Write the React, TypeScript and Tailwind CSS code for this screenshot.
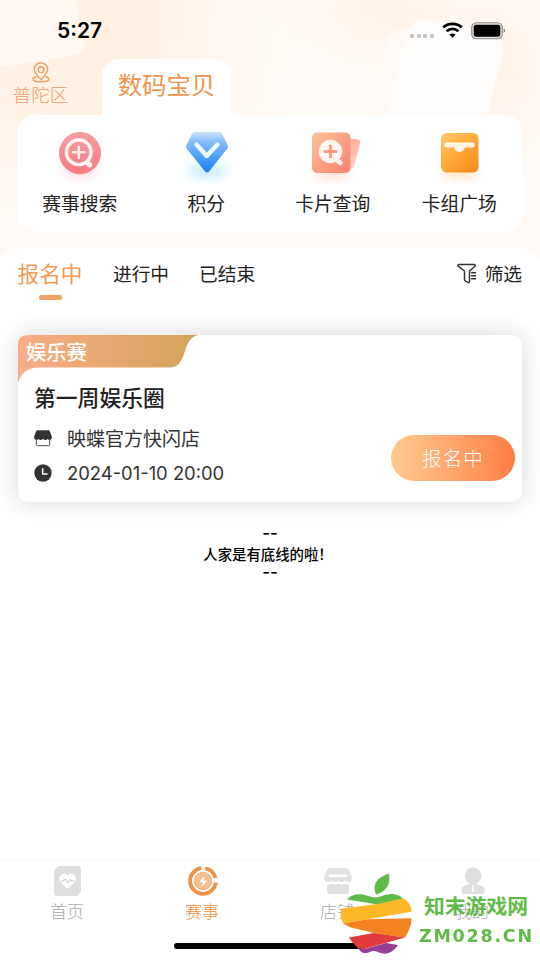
import type { ReactNode } from "react";

function SignalDots() {
  return (
    <div className="mt-[12px] flex gap-[2.7px]">
      {[0, 1, 2, 3].map((i) => (
        <span key={i} className="h-1 w-1 rounded-[1.5px] bg-[#c4c2c0]" />
      ))}
    </div>
  );
}

function WifiIcon() {
  return (
    <svg width="21" height="16" viewBox="0 0 21 16" fill="none" stroke="#000" strokeWidth="2.8">
      <path d="M1.2 5.4C6.3.8 14.7.8 19.8 5.4" />
      <path d="M4.6 9.2c3.4-3 8.4-3 11.8 0" />
      <path d="M10.5 15.7 7.4 12.6c1.8-1.5 4.4-1.5 6.2 0z" fill="#000" stroke="none" />
    </svg>
  );
}

function BatteryIcon() {
  return (
    <svg width="35" height="18" viewBox="0 0 35 18">
      <rect x=".7" y=".7" width="30.6" height="16" rx="4.8" fill="#e3e0dd" stroke="#8e8c8a" strokeWidth="1.1" />
      <rect x="2.7" y="2.7" width="26.6" height="12" rx="2.5" fill="#000" />
      <path d="M32.7 6.3c1.8.8 1.8 4 0 4.8z" fill="#777" />
    </svg>
  );
}

function PinIcon() {
  return (
    <svg width="18" height="21" viewBox="0 0 18 21" fill="none" stroke="#eda05c" strokeWidth="1.4">
      <path d="M9 17.6C6.4 15 2.3 11.3 2.3 7.6a6.7 6.7 0 0 1 13.4 0c0 3.7-4.1 7.4-6.7 10z" />
      <circle cx="9" cy="7.7" r="2.9" />
      <path d="M4.4 14.8c-2.1.5-3.4 1.2-3.4 2.1 0 1.6 3.6 2.8 8 2.8s8-1.2 8-2.8c0-.9-1.3-1.6-3.4-2.1" />
    </svg>
  );
}

function SearchBadge() {
  return (
    <svg width="60" height="60" viewBox="0 0 60 60">
      <defs>
        <linearGradient id="pink" x1="0" y1="0" x2="0" y2="1">
          <stop stopColor="#f2a0a1" />
          <stop offset="1" stopColor="#fa7a82" />
        </linearGradient>
        <filter id="soft" x="-50%" y="-50%" width="200%" height="200%">
          <feGaussianBlur stdDeviation="4" />
        </filter>
      </defs>
      <ellipse cx="30" cy="44" rx="17" ry="9" fill="#fdbcc0" opacity=".5" filter="url(#soft)" />
      <circle cx="30" cy="28" r="21" fill="url(#pink)" />
      <circle cx="28.8" cy="27.3" r="12.3" fill="none" stroke="#fff5f3" strokeWidth="3.4" />
      <path d="m37.5 37.5 2 2.2" stroke="#fff0ef" strokeWidth="5.4" strokeLinecap="round" />
      <path d="M28.8 21.7v11.4M23 27.3h11.5" stroke="#ffeceb" strokeWidth="2.5" strokeLinecap="round" />
    </svg>
  );
}

function PointsBadge() {
  return (
    <svg width="60" height="60" viewBox="0 0 60 60">
      <defs>
        <linearGradient id="blue" x1="0" y1="0" x2="0" y2="1">
          <stop stopColor="#c9e4ff" />
          <stop offset=".25" stopColor="#82bcfb" />
          <stop offset="1" stopColor="#1681f5" />
        </linearGradient>
      </defs>
      <ellipse cx="30" cy="46" rx="20" ry="9" fill="#b5e8ff" opacity=".6" filter="url(#soft)" />
      <path
        d="M18 7h24q2 0 3 1.700l5.600 11.200q1.100 2-.4 3.800L32 46.500q-2 2-4 0L9.800 23.700q-1.500-1.800-.4-3.800L15 8.700Q16 7 18 7z"
        fill="url(#blue)"
      />
      <path d="M19.500 19.500 29.700 31 40.500 19.500" fill="none" stroke="#edfaff" strokeWidth="4.4" strokeLinecap="round" strokeLinejoin="round" />
    </svg>
  );
}

function CardSearchBadge() {
  return (
    <svg width="60" height="60" viewBox="0 0 60 60">
      <defs>
        <linearGradient id="coral" x1="0" y1="0" x2="1" y2="1">
          <stop stopColor="#fec299" />
          <stop offset="1" stopColor="#f9806f" />
        </linearGradient>
        <linearGradient id="coralBack" x1="0" y1="0" x2="0" y2="1">
          <stop stopColor="#ffad98" />
          <stop offset="1" stopColor="#ffd5c8" />
        </linearGradient>
      </defs>
      <ellipse cx="29" cy="48" rx="18" ry="6" fill="#ffcdb2" opacity=".6" filter="url(#soft)" />
      <path d="m40 13 14.300 1.600q3.700.6 2.800 3.900l-6 23q-.8 3-4 3H38z" fill="url(#coralBack)" />
      <rect x="9" y="7.500" width="38.500" height="40.500" rx="5" fill="url(#coral)" />
      <circle cx="27.500" cy="26.500" r="11.700" fill="#fff8f2" />
      <path d="m33.500 34.500 3.700 3.500" stroke="#fff2ee" strokeWidth="4.800" strokeLinecap="round" />
      <path d="M27.500 21v11M22 26.500h11" stroke="#fb9b80" strokeWidth="3.200" strokeLinecap="round" />
    </svg>
  );
}

function DeckBadge() {
  return (
    <svg width="60" height="60" viewBox="0 0 60 60">
      <defs>
        <linearGradient id="amber" x1="0" y1="0" x2=".8" y2="1">
          <stop stopColor="#fec96e" />
          <stop offset=".5" stopColor="#feac38" />
          <stop offset="1" stopColor="#f88b23" />
        </linearGradient>
      </defs>
      <ellipse cx="30" cy="48" rx="18" ry="6" fill="#ffd69f" opacity=".6" filter="url(#soft)" />
      <rect x="11" y="8" width="37.500" height="39.500" rx="5.500" fill="url(#amber)" />
      <path d="M16.500 17.500h26a2.400 2.400 0 0 1 0 4.900h-7.700c-1.300 6-9.300 6-10.600 0h-7.700a2.400 2.400 0 0 1 0-4.900z" fill="#fff6e6" />
    </svg>
  );
}

function FilterIcon() {
  return (
    <svg width="20" height="21" viewBox="0 0 20 21" fill="none" stroke="#333" strokeWidth="1.500" strokeLinecap="round" strokeLinejoin="round">
      <path d="M2 1.600h15.200c1 0 1.400 1 .8 1.700L12.500 8v10.500q-.2 1.500-1.700.9l-2.300-1.200q-1-.5-1-1.600V8L1.300 3.300C.5 2.600 1 1.600 2 1.600z" />
      <path d="M14.500 9.700h4M14.500 12.700h4M14.500 15.700h4" />
    </svg>
  );
}

function ShopIcon() {
  return (
    <svg width="18" height="17" viewBox="0 0 18 17">
      <path d="M3.700.2h10.600q1.100 0 1.600 1l1.700 4.600c.6 2-0 4-1.600 4-1.200 0-1.900-.3-2.300-.9-1 1.300-3.300 1.300-4.700.1-1.400 1.200-3.700 1.200-4.700-.1C3.900 9.500 3.200 9.800 2 9.800.4 9.800-.2 7.800.4 5.800L2.100 1.200Q2.600.2 3.700.2z" fill="#333" />
      <path d="M2.300 9v5.500q0 1.200 1.200 1.200h11q1.200 0 1.200-1.200V9" fill="none" stroke="#444" strokeWidth="1" />
    </svg>
  );
}

function ClockIcon() {
  return (
    <svg width="18" height="18" viewBox="0 0 18 18">
      <circle cx="9" cy="9" r="8.700" fill="#333" />
      <path d="M8.700 4.300v5.600h4.800" fill="none" stroke="#fff" strokeWidth="1.500" />
    </svg>
  );
}

function HomeTabIcon() {
  return (
    <svg width="30" height="32" viewBox="0 0 30 32">
      <path d="M7 1h18q3 0 3 3v22.500L24 31H4q-3 0-3-3V7q0-2 1.300-3.200L4 2.300Q5.300 1 7 1z" fill="#dedede" />
      <path d="M14.500 24 7.800 17.500c-5-5.200 2.200-12 6.700-7 4.500-5 11.700 1.800 6.700 7z" fill="#fff" />
      <path d="M7.500 16h3l2-2 2.300 3.500 2.300-3 1.600 1.500h3" fill="none" stroke="#ccc" strokeWidth="1.100" />
    </svg>
  );
}

function MatchTabIcon() {
  return (
    <svg width="32" height="32" viewBox="0 0 32 32">
      <path d="M14.300 3.200A12.900 12.900 0 1 0 28.800 17.500" fill="none" stroke="#ed9347" strokeWidth="3.800" />
      <path d="M18.200 3.300A12.900 12.900 0 0 1 28.500 13" fill="none" stroke="#ed9347" strokeWidth="3.800" />
      <circle cx="16" cy="16" r="8.800" fill="#f5bf91" stroke="#f0a869" strokeWidth=".8" />
      <path d="m17.500 11-5 6h3.500l-.8 4.500 5-6h-3.500z" fill="#fff" />
    </svg>
  );
}

function StoreTabIcon() {
  return (
    <svg width="30" height="28" viewBox="0 0 30 28">
      <path d="M7 1h16q2 0 3 2l2.700 6.500c.7 3.500-1 5.500-3.700 5.500-2 0-3-1-3.500-1.500-1.500 2-4.500 2-6.500 0-2 2-5 2-6.500 0C8 14 7 15 5 15c-2.700 0-4.400-2-3.700-5.500L4 3Q5 1 7 1z" fill="#e1e1e1" />
      <path d="M7 8.800h16" stroke="#fff" strokeWidth="2.500" strokeLinecap="round" />
      <path d="M4 17.500c2.500.4 3.800-.2 4.700-1 2 1.500 4.500 1.500 6.300 0 1.800 1.500 4.300 1.500 6.300 0 1 .8 2.200 1.400 4.700 1v7q0 2.500-2.500 2.500h-17Q4 27 4 24.500z" fill="#e1e1e1" />
    </svg>
  );
}

function MeTabIcon() {
  return (
    <svg width="26" height="28" viewBox="0 0 26 28">
      <circle cx="13" cy="8.800" r="8.300" fill="#dfdfdf" />
      <path d="M9.500 14.500h7v2.800l6 1.900q2 .8 2 3V25q0 2-2 2h-19q-2 0-2-2v-2.800q0-2.200 2-3l6-1.900z" fill="#dfdfdf" />
      <path d="m13 18 1.400 1.700-.9 1.100.8 3.500-1.300 1.200-1.300-1.200.8-3.500-.9-1.100z" fill="#fff" />
    </svg>
  );
}

function AppleLogo() {
  return (
    <svg width="74" height="82" viewBox="0 0 74 82">
      <path d="M36 21.500C31.500 11 38 3.500 49 .8c1.500 9-1 17.500-13 20.700z" fill="#5dbb46" />
      <path d="M7 26.500c7-7.500 17-5.500 23-3 3.500 1.500 7 1.300 10.500 0 8-3 15.500-4 22.500 2L38 31.500z" fill="#5dbb46" />
      <path d="M2 35.500 38 31l25-5.700c5 2.500 8.500 7.500 8.500 13.500L28 46.300 3 50.500C.5 45 .5 40 2 35.500z" fill="#fdb827" />
      <path d="m3 50.500 25-4.200 43.500-1c0 7-3 13.500-6.500 19.200L34 60 11 54.500z" fill="#f58220" />
      <path d="M9 64.500 34 60l31 4.500L24 76q-4 1-6.500-1.500C14 71 11 68 9 64.500z" fill="#e33b3b" />
      <path d="m17.500 74.500 7 1.500L46 70l12 2C53 79.500 46.500 83 38 79c-4-1.700-6-1-10 .7-5 1.800-8-1.700-10.500-5.200z" fill="#963d97" />
    </svg>
  );
}

function Watermark() {
  return (
    <div className="absolute left-[340px] top-[873px] z-10 flex">
      <AppleLogo />
      <div className="ml-[5px] mt-[18px] text-[#60bb46]">
        <p className="ml-[5px] whitespace-nowrap text-[20.8px] font-bold leading-7">知末游戏网</p>
        <p className="mt-[5px] w-[114px] whitespace-nowrap font-['DejaVu_Sans'] text-[17px] font-bold leading-6 tracking-[1.7px]">
          <span className="inline-block origin-left scale-x-[1.03]">ZM028.CN</span>
        </p>
      </div>
    </div>
  );
}

// soft peach glow with the two faint tilted cards behind the status bar
function HeaderBackdrop() {
  return (
    <div className="absolute inset-x-0 top-0 h-[300px] overflow-hidden bg-[radial-gradient(ellipse_120px_70px_at_390px_10px,#fff2e7,transparent),radial-gradient(ellipse_70px_120px_at_505px_70px,#fff3e9,transparent),linear-gradient(100deg,#fff3e7_0%,#fff0e1_20%,#fff7f0_38%,#fffbf7_55%,#fffaf6_100%)]">
      <div className="absolute inset-0 bg-linear-to-b from-transparent from-30% to-[#fffaf6] to-75%" />
      <svg className="absolute left-0 top-0" width="540" height="300" viewBox="0 0 540 300">
        <path d="M0 0h76l8 46q1 7-6 8.500L0 67z" fill="#fff9f2" />
        <path d="M368 115l18-72q4-15 19-15h20v87z" fill="#fffaf6" />
        <path d="M386 115l20-78q5-19 26-17l56 12q19 5 15 22l-16 61z" fill="#fffdfb" />
      </svg>
    </div>
  );
}

const shortcuts: { label: string; icon: ReactNode }[] = [
  { label: "赛事搜索", icon: <SearchBadge /> },
  { label: "积分", icon: <PointsBadge /> },
  { label: "卡片查询", icon: <CardSearchBadge /> },
  { label: "卡组广场", icon: <DeckBadge /> },
];

const navItems: { label: string; icon: ReactNode; active?: boolean }[] = [
  { label: "首页", icon: <HomeTabIcon /> },
  { label: "赛事", icon: <MatchTabIcon />, active: true },
  { label: "店铺", icon: <StoreTabIcon /> },
  { label: "我的", icon: <MeTabIcon /> },
];

function EventCard() {
  return (
    <article className="relative mx-[18px] mt-[34px] h-[167px] rounded-[10px] bg-white pl-4 shadow-[0_0_24px_rgba(0,0,0,0.16)]">
      <svg className="absolute left-0 top-0" width="184" height="48" viewBox="0 0 184 48">
        <defs>
          <linearGradient id="ribbon">
            <stop stopColor="#f8ad87" />
            <stop offset="1" stopColor="#d4a359" />
          </linearGradient>
        </defs>
        <path d="M0 48V10Q0 0 10 0h171c-8 1-11 7-14 16-4 12-7 16.500-16 16.500H21Q4 32.500 0 48z" fill="url(#ribbon)" />
      </svg>
      <div className="relative -ml-[8px] text-[20.3px] font-medium leading-[32px] text-white">娱乐赛</div>
      <h2 className="mt-[13px] text-[21.8px] font-medium leading-[34px] text-[#222]">第一周娱乐圈</h2>
      <div className="mt-[9px] flex h-[30px] items-center gap-[15px] text-[19px] text-[#333]">
        <ShopIcon />
        <span>映蝶官方快闪店</span>
      </div>
      <div className="mt-[5px] flex h-[30px] items-center gap-[15px] text-[#333]">
        <ClockIcon />
        <span className="mt-px font-['Inter'] text-[18.4px]">2024-01-10 20:00</span>
      </div>
      <button className="absolute bottom-[21px] right-[7px] h-[46px] w-[124px] rounded-full bg-linear-to-r from-[#ffcb8e] to-[#ff7d45] text-[19.5px] font-light tracking-[1.2px] text-white">
        报名中
      </button>
    </article>
  );
}

export default function App() {
  return (
    <div className="relative flex h-[960px] w-[540px] flex-col overflow-hidden bg-white font-['Noto_Sans_CJK_SC',sans-serif]">
      <HeaderBackdrop />

      <header className="relative h-[115px] shrink-0">
        <div className="flex h-[59px] justify-between pl-[57px] pr-[34px] pt-[18px]">
          <span className="font-['Inter'] text-[21px] font-semibold leading-[26px] text-black">5:27</span>
          <div className="flex gap-2 pt-1">
            <SignalDots />
            <WifiIcon />
            <BatteryIcon />
          </div>
        </div>
        <div className="flex h-[56px]">
          <div className="flex w-[102px] flex-col items-center pr-[21px] pt-[3px] text-[#e8a16a]">
            <PinIcon />
            <span className="text-[18.6px] font-light leading-[22px]">普陀区</span>
          </div>
          <div className="h-[56px] w-[129px] rounded-t-2xl bg-white text-center text-[24.4px] leading-[50px] text-[#ee9650]">
            数码宝贝
          </div>
        </div>
      </header>

      <section className="relative mx-[17px] flex h-[117px] shrink-0 rounded-[18px] bg-white">
        {shortcuts.map((s) => (
          <div key={s.label} className="flex flex-1 flex-col items-center pt-[10px]">
            {s.icon}
            <span className="-ml-px mt-1 text-[18.8px] leading-[28px] text-[#222]">{s.label}</span>
          </div>
        ))}
      </section>

      <main className="relative mt-4 flex-1 rounded-t-2xl bg-white">
        <div className="flex h-[53px] items-start whitespace-nowrap pl-[17px] pr-[18px] pt-[9px] text-[18.7px] leading-8 text-[#222]">
          <div className="flex w-[66px] flex-col items-center text-[21.7px] text-[#f09a55]">
            <span>报名中</span>
            <span className="mt-[6px] h-[5px] w-[23px] rounded-full bg-[#f0a263]" />
          </div>
          <span className="ml-[30px]">进行中</span>
          <span className="ml-[30px]">已结束</span>
          <div className="ml-auto flex items-center gap-[8px]">
            <FilterIcon />
            <span>筛选</span>
          </div>
        </div>
        <EventCard />
        <div className="mt-[22px] text-center text-[14.4px] font-medium leading-[19.5px] text-black">
          <p className="font-['Inter'] text-[17px]">--</p>
          <p className="-ml-1">人家是有底线的啦！</p>
          <p className="font-['Inter'] text-[17px]">--</p>
        </div>
      </main>

      <nav className="relative flex h-[101px] shrink-0 border-t border-[#f8f8f8] bg-white">
        {navItems.map((n) => (
          <div
            key={n.label}
            className={`flex flex-1 flex-col items-center pt-[5px] text-[17px] font-light leading-[26px] ${n.active ? "text-[#ed9347]" : "text-[#aaa]"}`}
          >
            <div className="flex h-8 items-center">{n.icon}</div>
            <span className="-ml-px mt-[1px]">{n.label}</span>
          </div>
        ))}
        <div className="absolute bottom-[11px] left-[174px] h-[6px] w-[192px] rounded-full bg-black" />
      </nav>

      <Watermark />
    </div>
  );
}
